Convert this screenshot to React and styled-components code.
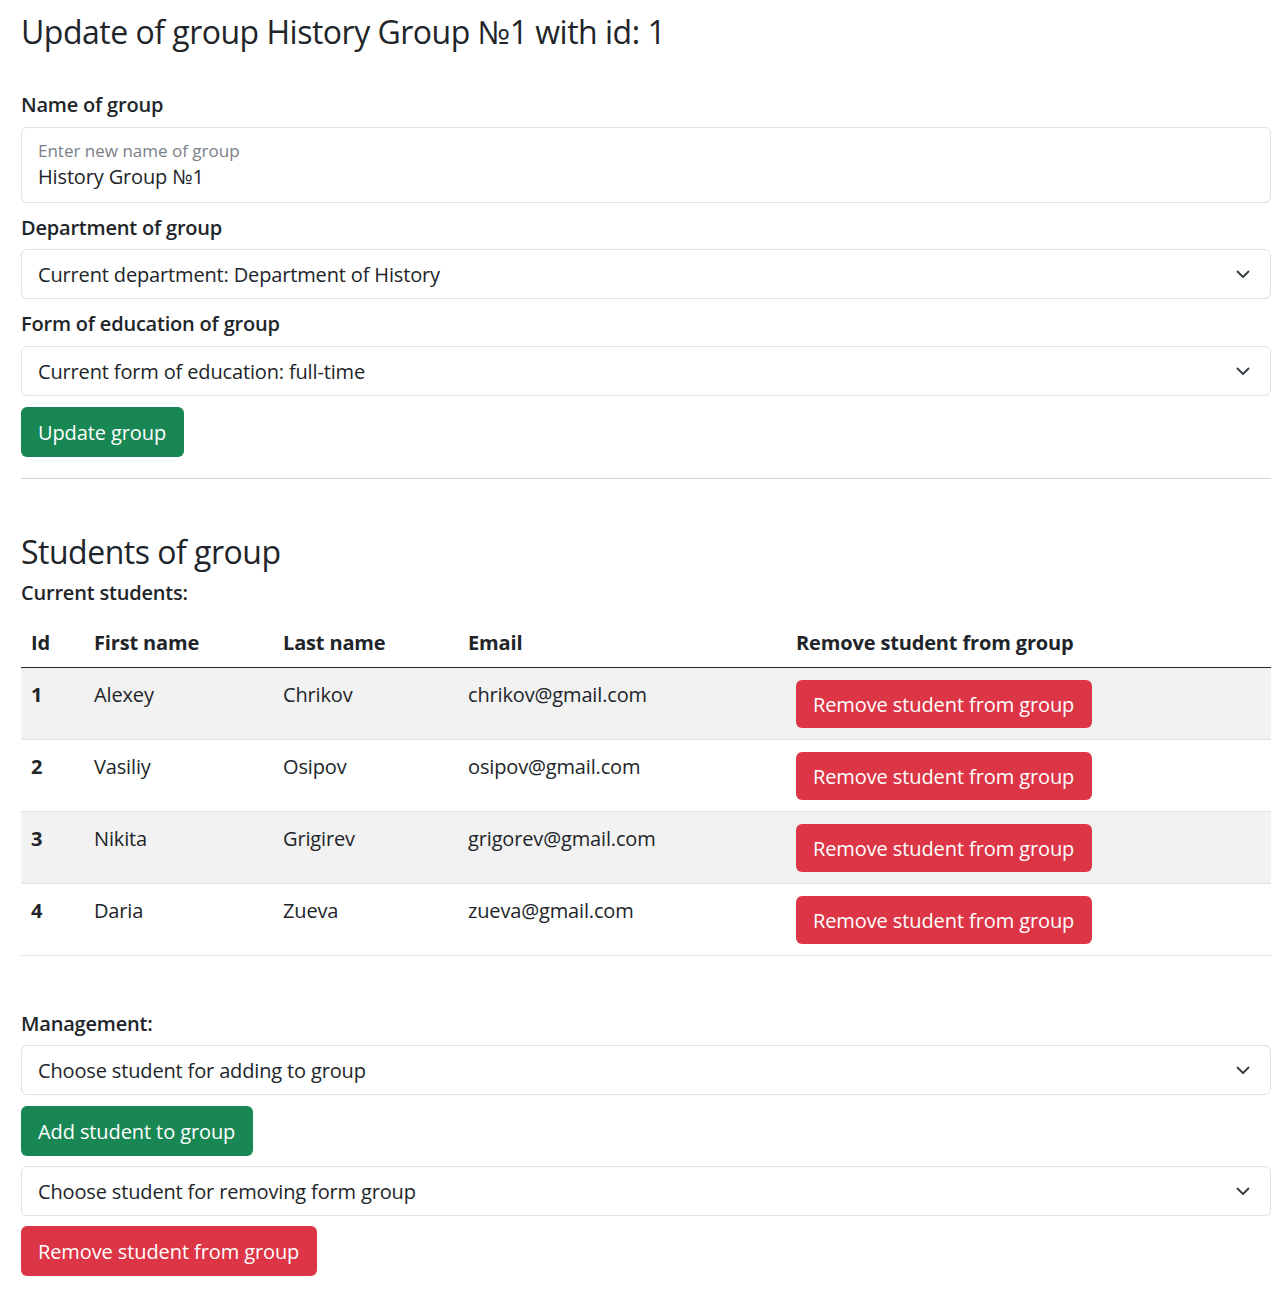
import React from "react";
import styled, { createGlobalStyle } from "styled-components";

const text = "#212529";
const green = "#198754";
const red = "#dc3545";
const border = "#dee2e6";
const font = `"Open Sans", "Noto Sans", Arial, sans-serif`;

const GlobalStyle = createGlobalStyle`
  * { box-sizing: border-box; }
  body {
    margin: 0;
    background: #fff;
    color: ${text};
    font-family: ${font};
  }
`;

const Page = styled.div`
  padding: 9px 12px 20px 21px;
  display: flex;
  flex-direction: column;
`;

const Title = styled.h1`
  margin: 0 0 35px;
  font-size: 32px;
  font-weight: 500;
  line-height: 46px;
  letter-spacing: -0.5px;
`;

const SubTitle = styled.h2`
  margin: 0;
  font-size: 32px;
  font-weight: 500;
  line-height: 38px;
  letter-spacing: -0.5px;
`;

const Label = styled.div`
  font-size: 20px;
  font-weight: 600;
  line-height: 30px;
  letter-spacing: -0.2px;
  margin-top: ${(p) => p.$top ?? 0}px;
  margin-bottom: ${(p) => p.$bottom ?? 6}px;
`;

const Floating = styled.div`
  height: 76px;
  border: 1px solid ${border};
  border-radius: 6px;
  padding: 12px 16px 0;
  display: flex;
  flex-direction: column;
`;

const FloatLabel = styled.span`
  font-size: 17px;
  line-height: 22px;
  color: #7a8087;
`;

const FloatValue = styled.span`
  font-size: 20px;
  line-height: 30px;
  letter-spacing: -0.15px;
`;

const Select = styled.div`
  height: 50px;
  border: 1px solid ${border};
  border-radius: 6px;
  padding: 0 19px 0 16px;
  display: flex;
  align-items: center;
  justify-content: space-between;
  font-size: 20px;
  letter-spacing: -0.15px;
  margin-top: ${(p) => p.$top ?? 0}px;
`;

const Chevron = () => (
  <svg width="16" height="16" viewBox="0 0 16 16" fill="none">
    <path
      d="M2.5 5.5l5.5 5.5 5.5-5.5"
      stroke="#343a40"
      strokeWidth="1.8"
      strokeLinecap="round"
      strokeLinejoin="round"
    />
  </svg>
);

const Button = styled.button`
  align-self: flex-start;
  height: 50px;
  padding: 0 18px 0 17px;
  border: none;
  border-radius: 6px;
  background: ${(p) => (p.$variant === "danger" ? red : green)};
  color: #fff;
  font-family: ${font};
  font-size: 20px;
  letter-spacing: -0.1px;
  margin-top: ${(p) => p.$top ?? 0}px;
  cursor: pointer;
`;

const Rule = styled.hr`
  margin: 21px 0 54px;
  border: none;
  border-top: 1px solid #d3d4d5;
`;

const Table = styled.table`
  width: 100%;
  border-collapse: collapse;
  margin-top: 10px;
  font-size: 20px;
  letter-spacing: -0.15px;
`;

const Th = styled.th`
  text-align: left;
  font-weight: 700;
  padding: 10px 10px 9px;
  line-height: 30px;
  border-bottom: 1px solid ${text};
  width: ${(p) => (p.$w ? `${p.$w}px` : "auto")};
`;

const Tr = styled.tr`
  background: ${(p) => (p.$striped ? "#f2f2f2" : "#fff")};
  border-bottom: 1px solid ${border};
`;

const Td = styled.td`
  vertical-align: top;
  padding: 12px 10px 11px;
  line-height: 30px;
  font-weight: ${(p) => (p.$bold ? 700 : 400)};
`;

const CellButton = styled(Button)`
  height: 48px;
  display: block;
  margin-top: 0;
`;

const students = [
  { id: 1, first: "Alexey", last: "Chrikov", email: "chrikov@gmail.com" },
  { id: 2, first: "Vasiliy", last: "Osipov", email: "osipov@gmail.com" },
  { id: 3, first: "Nikita", last: "Grigirev", email: "grigorev@gmail.com" },
  { id: 4, first: "Daria", last: "Zueva", email: "zueva@gmail.com" },
];

export default function App() {
  return (
    <>
      <GlobalStyle />
      <Page>
        <Title>Update of group History Group №1 with id: 1</Title>

        <Label $bottom={7}>Name of group</Label>
        <Floating>
          <FloatLabel>Enter new name of group</FloatLabel>
          <FloatValue>History Group №1</FloatValue>
        </Floating>

        <Label $top={10}>Department of group</Label>
        <Select>
          Current department: Department of History
          <Chevron />
        </Select>

        <Label $top={10} $bottom={7}>Form of education of group</Label>
        <Select>
          Current form of education: full-time
          <Chevron />
        </Select>

        <Button $top={11}>Update group</Button>

        <Rule />

        <SubTitle>Students of group</SubTitle>
        <Label $top={7} $bottom={0}>Current students:</Label>

        <Table>
          <thead>
            <tr>
              <Th $w={63}>Id</Th>
              <Th $w={189}>First name</Th>
              <Th $w={185}>Last name</Th>
              <Th $w={328}>Email</Th>
              <Th>Remove student from group</Th>
            </tr>
          </thead>
          <tbody>
            {students.map((s, i) => (
              <Tr key={s.id} $striped={i % 2 === 0}>
                <Td $bold>{s.id}</Td>
                <Td>{s.first}</Td>
                <Td>{s.last}</Td>
                <Td>{s.email}</Td>
                <Td>
                  <CellButton $variant="danger">Remove student from group</CellButton>
                </Td>
              </Tr>
            ))}
          </tbody>
        </Table>

        <Label $top={53}>Management:</Label>
        <Select>
          Choose student for adding to group
          <Chevron />
        </Select>
        <Button $top={11}>Add student to group</Button>
        <Select $top={10}>
          Choose student for removing form group
          <Chevron />
        </Select>
        <Button $top={10} $variant="danger">Remove student from group</Button>
      </Page>
    </>
  );
}
